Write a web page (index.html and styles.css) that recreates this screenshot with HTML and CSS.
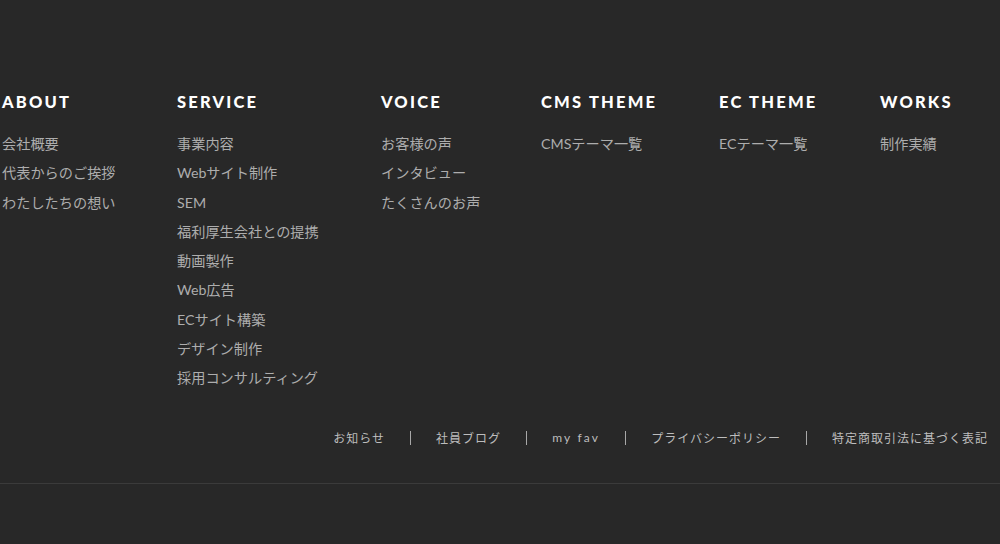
FILE: index.html
```html
<!DOCTYPE html>
<html lang="ja">
<head>
<meta charset="utf-8">
<title>Footer</title>
<link rel="stylesheet" href="styles.css">
</head>
<body>
<footer class="footer">
  <nav class="sitemap">
    <div class="col">
      <h3 class="col-title">ABOUT</h3>
      <ul class="col-links">
        <li>会社概要</li>
        <li>代表からのご挨拶</li>
        <li>わたしたちの想い</li>
      </ul>
    </div>
    <div class="col">
      <h3 class="col-title">SERVICE</h3>
      <ul class="col-links">
        <li>事業内容</li>
        <li>Webサイト制作</li>
        <li>SEM</li>
        <li>福利厚生会社との提携</li>
        <li>動画製作</li>
        <li>Web広告</li>
        <li>ECサイト構築</li>
        <li>デザイン制作</li>
        <li>採用コンサルティング</li>
      </ul>
    </div>
    <div class="col">
      <h3 class="col-title">VOICE</h3>
      <ul class="col-links">
        <li>お客様の声</li>
        <li>インタビュー</li>
        <li>たくさんのお声</li>
      </ul>
    </div>
    <div class="col">
      <h3 class="col-title">CMS THEME</h3>
      <ul class="col-links">
        <li>CMSテーマ一覧</li>
      </ul>
    </div>
    <div class="col">
      <h3 class="col-title">EC THEME</h3>
      <ul class="col-links">
        <li>ECテーマ一覧</li>
      </ul>
    </div>
    <div class="col">
      <h3 class="col-title">WORKS</h3>
      <ul class="col-links">
        <li>制作実績</li>
      </ul>
    </div>
  </nav>
  <ul class="sub-links">
    <li>お知らせ</li>
    <li class="sep"></li>
    <li>社員ブログ</li>
    <li class="sep"></li>
    <li class="latin">my fav</li>
    <li class="sep"></li>
    <li>プライバシーポリシー</li>
    <li class="sep"></li>
    <li>特定商取引法に基づく表記</li>
  </ul>
  <div class="rule"></div>
  <div class="bottom"></div>
</footer>
</body>
</html>
```
FILE: styles.css
```css
html, body {
  margin: 0;
  padding: 0;
  background: #282828;
}
body {
  width: 1000px;
  height: 544px;
  overflow: hidden;
  font-family: "Lato", "Noto Sans CJK JP", sans-serif;
}
.footer {
  display: flex;
  flex-direction: column;
}
.sitemap {
  display: grid;
  grid-template-columns: 175px 204px 160px 178px 161px 1fr;
  padding: 90px 0 0 2px;
}
.col-title {
  margin: 0;
  font-family: "Lato", sans-serif;
  font-weight: 900;
  font-size: 16.5px;
  line-height: 24px;
  letter-spacing: 2.2px;
  color: #ffffff;
}
.col-links {
  list-style: none;
  margin: 15px 0 0;
  padding: 0;
}
.col-links li {
  font-family: "Lato", "Noto Sans CJK JP", sans-serif;
  font-size: 14.2px;
  line-height: 29.3px;
  color: #adadad;
}
.sub-links {
  list-style: none;
  margin: 35px 12px 0 0;
  padding: 0;
  display: flex;
  justify-content: flex-end;
  align-items: center;
  gap: 25px;
}
.sub-links li {
  font-family: "Noto Sans CJK JP", sans-serif;
  font-size: 12px;
  line-height: 20px;
  letter-spacing: 1px;
  color: #bdbdbd;
}
.sub-links li.latin {
  font-family: "Lato", sans-serif;
  letter-spacing: 2.2px;
}
.sub-links li.sep {
  width: 1px;
  height: 14px;
  background: #a8a8a8;
}
.rule {
  margin-top: 35px;
  height: 1px;
  background: #3b3b3b;
}
.bottom {
  height: 60px;
}
```
